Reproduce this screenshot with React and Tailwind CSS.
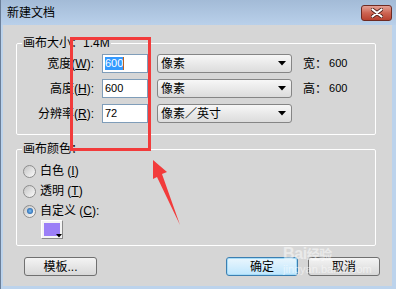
import React from 'react';

const FONT = "font-['Liberation_Sans','Noto_Sans_CJK_SC',sans-serif]";

function Caret() {
  return (
    <svg width="8" height="5" viewBox="0 0 8 5">
      <path d="M0 0h8L4 4.5z" fill="#000" />
    </svg>
  );
}

function Select({ value }) {
  return (
    <div className="w-[135px] h-[19px] rounded-[3px] border border-[#858585] bg-linear-to-b from-[#f7f7f7] to-[#dcdcdc] flex items-center justify-between pl-[3px] pr-[5px] text-[12px] leading-none">
      <span>{value}</span>
      <Caret />
    </div>
  );
}

function Field({ label, letter, value, selected, unit, info }) {
  return (
    <div className="flex items-center h-[19px]">
      <div className="w-[77px] text-right text-[12px] leading-none">
        {label}(<u>{letter}</u>):
      </div>
      <div className="ml-[8px] w-[46px] h-[19px] border border-[#7f9db9] bg-white flex items-center pl-[2px] text-[11px]">
        {selected ? (
          <>
            <span className="bg-[#3399ff] text-white leading-[13px]">{value}</span>
            <span className="w-[1px] h-[13px] bg-[#c0601a]" />
          </>
        ) : (
          <span>{value}</span>
        )}
      </div>
      <div className="ml-[9px]">
        <Select value={unit} />
      </div>
      {info && (
        <div className="ml-[11px] flex items-center text-[12px] leading-none">
          <span>{info}：</span>
          <span className="ml-[2px] text-[11px]">600</span>
        </div>
      )}
    </div>
  );
}

function Radio({ checked, label, letter, colon }) {
  return (
    <div className="flex items-center h-[20px] pl-[6px]">
      <span className="w-[13px] h-[13px] rounded-full border border-[#8d8d8d] bg-linear-to-br from-[#c4c4c4] to-[#fbfbfb] flex items-center justify-center">
        {checked && <span className="w-[6px] h-[6px] rounded-full bg-radial from-[#7cc0f5] to-[#0d4c98]" />}
      </span>
      <span className="ml-[4px] text-[12px] leading-none">
        {label} (<u>{letter}</u>){colon ? ':' : ''}
      </span>
    </div>
  );
}

function Group({ title, className, children }) {
  return (
    <div className={`relative ml-[13px] w-[360px] border border-white rounded-[2px] ${className}`}>
      <span className="absolute left-[5px] top-[-8px] px-[1px] bg-[#d6d6d6] text-[12px] leading-[14px]">{title}</span>
      {children}
    </div>
  );
}

function Button({ children, primary }) {
  return (
    <div
      className={`w-[72px] h-[19px] rounded-[3px] flex items-center justify-center text-[12px] leading-none border ${
        primary
          ? 'border-[#3c7fb1] bg-linear-to-b from-[#eaf6fd] to-[#bee6fd] shadow-[inset_0_0_0_1px_#a6dcf8]'
          : 'border-[#707070] bg-linear-to-b from-[#f4f4f4] to-[#d8d8d8]'
      }`}
    >
      {children}
    </div>
  );
}

export default function App() {
  return (
    <div className={`relative w-[396px] h-[289px] flex flex-col bg-[#bcd3ec] border-l border-[#6b7f99] text-black ${FONT}`}>
      {/* Title bar */}
      <div className="h-[25px] flex items-center justify-between pl-[6px] pr-[4px] bg-linear-to-b from-[#a3bbd7] to-[#b9d0ea]">
        <span className="text-[12px] leading-none">新建文档</span>
        <div className="w-[31px] h-[16px] rounded-[3px] border border-[#6e2a22] bg-linear-to-b from-[#e3a196] via-[#cd6452] to-[#b8412f] flex items-center justify-center">
          <svg width="12" height="10" viewBox="0 0 12 10">
            <path d="M1.5 1.5l9 7M10.5 1.5l-9 7" stroke="#4a1a14" strokeWidth="3.6" strokeLinecap="round" />
            <path d="M1.5 1.5l9 7M10.5 1.5l-9 7" stroke="#fff" strokeWidth="2.2" strokeLinecap="round" />
          </svg>
        </div>
      </div>

      {/* Content */}
      <div className="flex-1 ml-[2px] mr-[4px] mb-[3px] bg-[#d6d6d6] flex flex-col">
        <Group title="画布大小：1.4M" className="mt-[18px] h-[92px]">
          <div className="flex flex-col gap-[6px] pt-[10px]">
            <Field label="宽度" letter="W" value="600" selected unit="像素" info="宽" />
            <Field label="高度" letter="H" value="600" unit="像素" info="高" />
            <Field label="分辨率" letter="R" value="72" unit="像素／英寸" />
          </div>
        </Group>

        <Group title="画布颜色：" className="mt-[14px] h-[97px]">
          <div className="flex flex-col pt-[11px]">
            <Radio label="白色" letter="I" />
            <Radio label="透明" letter="T" />
            <Radio checked label="自定义" letter="C" colon />
            <div className="ml-[24px] mt-[-1px] w-[22px] h-[19px] border border-white border-r-[#8a8a8a] border-b-[#8a8a8a] p-[2px] relative bg-[#f4f4f4]">
              <div className="w-full h-full bg-[#9b7ff7]" />
              <svg className="absolute right-[0px] bottom-[0px]" width="6" height="4" viewBox="0 0 6 4">
                <path d="M0 0h6L3 3.5z" fill="#000" />
              </svg>
            </div>
          </div>
        </Group>

        <div className="mt-[11px] flex items-center pl-[21px] pr-[12px]">
          <div className="w-[73px] h-[19px] rounded-[3px] border border-[#707070] bg-linear-to-b from-[#f4f4f4] to-[#d8d8d8] flex items-center justify-center text-[12px] leading-none">
            模板...
          </div>
          <div className="ml-auto flex gap-[10px]">
            <Button primary>确定</Button>
            <Button>取消</Button>
          </div>
        </div>
      </div>

      {/* Watermark */}
      <div className="absolute left-[282px] top-[246px] flex flex-col items-start text-white opacity-50 pointer-events-none">
        <span className="text-[16px] leading-[16px] font-bold tracking-tight">Bai<span className="text-[13px]">经验</span></span>
        <span className="text-[11px] leading-[12px]">jingyan.baidu.com</span>
      </div>

      {/* Red annotations */}
      <svg className="absolute left-0 top-0 pointer-events-none" width="396" height="289" viewBox="0 0 396 289">
        <rect x="70.5" y="38.5" width="78" height="111" fill="none" stroke="#f23b3b" strokeWidth="3" />
        <polygon points="152,160 166,172 161,174 179,225 156,177 152,179" fill="#f23b3b" />
      </svg>
    </div>
  );
}
